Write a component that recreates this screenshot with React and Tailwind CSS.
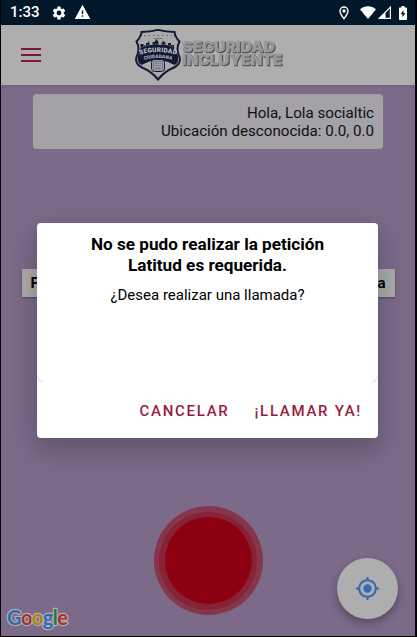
import React from "react";

function StatusBar() {
  return (
    <div className="flex h-[25px] shrink-0 items-center bg-[#00182a] pl-[9px] pr-[8px] text-white">
      <span className="w-[41px] text-[15px] leading-[25px] font-medium">1:33</span>
      <svg className="h-4 w-4" viewBox="0 0 24 24" fill="currentColor">
        <path d="M19.14 12.94c.04-.3.06-.61.06-.94s-.02-.64-.07-.94l2.03-1.58a.49.49 0 0 0 .12-.61l-1.92-3.32a.49.49 0 0 0-.59-.22l-2.39.96c-.5-.38-1.03-.7-1.62-.94L14.4 2.81a.48.48 0 0 0-.48-.41h-3.84c-.24 0-.43.17-.47.41l-.36 2.54c-.59.24-1.13.57-1.62.94l-2.39-.96a.48.48 0 0 0-.59.22L2.74 8.87a.48.48 0 0 0 .12.61l2.03 1.58c-.05.3-.09.63-.09.94s.02.64.07.94l-2.03 1.58a.49.49 0 0 0-.12.61l1.92 3.32c.12.22.37.29.59.22l2.39-.96c.5.38 1.03.7 1.62.94l.36 2.54c.05.24.24.41.48.41h3.84c.24 0 .44-.17.47-.41l.36-2.54c.59-.24 1.13-.56 1.62-.94l2.39.96c.22.08.47 0 .59-.22l1.92-3.32a.48.48 0 0 0-.12-.61zM12 15.6a3.6 3.6 0 1 1 0-7.2 3.6 3.6 0 0 1 0 7.2z" />
      </svg>
      <svg className="ml-[7px] h-[17px] w-[17px]" viewBox="0 0 24 24" fill="currentColor">
        <path d="M1 21h22L12 1 1 21zm12-3h-2v-2h2v2zm0-4h-2v-5h2v5z" />
      </svg>
      <div className="ml-auto flex items-center">
        <svg className="mr-px h-4 w-4" viewBox="0 0 24 24" fill="currentColor">
          <path d="M12 2a7 7 0 0 0-7 7c0 5.25 7 13 7 13s7-7.75 7-13a7 7 0 0 0-7-7zM7 9a5 5 0 0 1 10 0c0 2.88-2.88 7.19-5 9.88C9.92 16.21 7 11.85 7 9z" />
          <circle cx="12" cy="9" r="2.5" />
        </svg>
        <svg className="ml-[7px] h-[13px] w-4" viewBox="0 0 16 13" fill="currentColor">
          <path d="M0 3.2C4.6-.8 11.4-.8 16 3.2L8 13z" />
        </svg>
        <svg className="ml-[2px] h-[13px] w-[13px]" viewBox="0 0 13 13" fill="none" stroke="currentColor">
          <path d="M1.2 12.4H12.4V1.2z" strokeWidth="1.2" />
          <path d="M1 12.5L7.5 6V12.5z" fill="currentColor" stroke="none" />
        </svg>
        <svg className="ml-[8px] h-[14px] w-[8px]" viewBox="0 0 8 14">
          <path fill="#fff" d="M2.500 0h3v1.400H7.300a.7.700 0 0 1 .7.700V13.300a.7.700 0 0 1-.7.700H.7a.7.700 0 0 1-.7-.7V2.100a.7.700 0 0 1 .7-.7H2.500z" />
          <path fill="#00182a" d="M4.500 4L1.700 8.300h1.800V11.500L6.300 7H4.500z" />
        </svg>
      </div>
    </div>
  );
}

function Shield() {
  return (
    <svg className="h-[52px] w-[46px]" viewBox="0 0 46 52">
      <path d="M6.500 3Q15 3 23 .9Q31 3 39.500 3Q40 8 44.500 12.500Q40.500 20 44.500 28Q46.500 35 38 39Q30 42 23 50.500Q16 42 8 39Q-.5 35 1.500 28Q5.500 20 1.500 12.500Q6 8 6.500 3z" fill="#aaa" stroke="#111936" strokeWidth="2" />
      <path d="M5.500 19V15h3v1.500h2.500V14h2v-2l1.500 2v2h3v-3h2l2-3 2 3v3h3v-2l2-2 2 2v2h2.500v-2h3v2h3V20L43 27Q44 34 39.500 36L33 33Q23 29 13 33L6.500 36Q2 34 3 27z" fill="#111936" />
      <path d="M9 6.500h28" stroke="#62656f" strokeDasharray="1.500 3" />
      <path d="M18.500 9.500h9" stroke="#70737e" />
      <path d="M5 19Q23 11 41 19" fill="none" stroke="#858994" strokeWidth=".8" strokeDasharray="1.500 1" />
      <path id="curve1" d="M4 26Q23 20 42 26" fill="none" />
      <text fontSize="6.500" fontWeight="900" fill="#bfc0c4" textAnchor="middle" className="font-['Roboto']">
        <textPath href="#curve1" startOffset="50%" textLength="37">SEGURIDAD</textPath>
      </text>
      <path id="curve2" d="M6 31.500Q23 26.500 40 31.500" fill="none" />
      <text fontSize="4.800" fontWeight="900" fill="#b4b5ba" textAnchor="middle" className="font-['Roboto']">
        <textPath href="#curve2" startOffset="50%" textLength="28">CIUDADANA</textPath>
      </text>
      <rect x="16.500" y="30.500" width="13" height="12" rx="3" fill="#999da5" stroke="#111936" strokeWidth="1" />
      <rect x="18.500" y="32.500" width="9" height="7.500" rx="1.500" fill="none" stroke="#656b7c" strokeWidth=".8" />
      <path d="M20 34.500h6M20 36.500h6M21 38.500h4" stroke="#737989" strokeWidth=".7" />
    </svg>
  );
}

function Header() {
  return (
    <header className="flex h-[60px] shrink-0 items-center bg-[#aeaeae] pl-[20px]">
      <div className="flex w-5 flex-col gap-[4px]">
        <span className="h-[2px] bg-[#7b1a37]" />
        <span className="h-[2px] bg-[#7b1a37]" />
        <span className="h-[2px] bg-[#7b1a37]" />
      </div>
      <div className="ml-[94px] flex items-center">
        <Shield />
        <svg className="h-[30px] w-[104px] -translate-y-px" viewBox="0 0 104 30">
          <g className="font-['Inter'] drop-shadow-[1px_1px_0px_#484848]" fontSize="14" fontWeight="900" fill="#979899" stroke="#979899" strokeWidth=".4">
            <text x="1" y="13" textLength="93" lengthAdjust="spacingAndGlyphs">SEGURIDAD</text>
            <text x="1" y="25.500" textLength="100" lengthAdjust="spacingAndGlyphs">INCLUYENTE</text>
          </g>
        </svg>
      </div>
    </header>
  );
}

function Dialog() {
  return (
    <div className="absolute top-[223px] left-[36px] flex h-[215px] w-[341px] flex-col rounded-[4px] bg-white text-black shadow-[0_10px_24px_2px_rgba(0,0,0,0.22)]">
      <div className="relative h-[159px] pt-[11px] text-center">
        <h1 className="text-[17.150px] leading-[20.500px] font-bold">
          No se pudo realizar la petición
          <br />
          Latitud es requerida.
        </h1>
        <p className="mt-[11px] text-[15px] leading-[18px]">¿Desea realizar una llamada?</p>
        <span className="absolute bottom-0 left-0 h-[6px] w-[6px] rounded-bl-[6px] border-b border-l border-[#e2e2e2]" />
        <span className="absolute right-0 bottom-0 h-[6px] w-[6px] rounded-br-[6px] border-r border-b border-[#e2e2e2]" />
      </div>
      <div className="flex h-[56px] items-center justify-end gap-[25px] pt-[2px] pr-[16px] text-[15px] font-medium tracking-[1.700px] text-[#9b1c41]">
        <button>CANCELAR</button>
        <button>¡LLAMAR YA!</button>
      </div>
    </div>
  );
}

function GoogleMark() {
  return (
    <svg className="absolute bottom-[3px] left-[4px] h-[28px] w-[68px]" viewBox="0 0 68 28">
      <text x="2" y="20" textLength="61" fontSize="20" className="font-['Lato'] [paint-order:stroke]" fontWeight="700" stroke="#b2adb7" strokeWidth="2.400" strokeLinejoin="round">
        <tspan fill="#3267b4">G</tspan><tspan fill="#a83229">o</tspan><tspan fill="#b08208">o</tspan><tspan fill="#3267b4">g</tspan><tspan fill="#25783c">l</tspan><tspan fill="#a83229">e</tspan>
      </text>
    </svg>
  );
}

export default function App() {
  return (
    <div className="h-[637px] w-[417px] overflow-hidden border-r-2 border-b border-l border-black bg-black font-['Roboto',sans-serif]">
      <div className="relative flex h-full flex-col bg-[#7b6a88]">
        <StatusBar />
        <Header />
        <main className="flex flex-1 flex-col items-center bg-[linear-gradient(#716080,#7b6a88_4px)]">
          <section className="mt-[9px] h-[55px] w-[350px] rounded-[4px] bg-[#a4a2a6] px-[9px] pt-[11px] text-right text-[15.150px] leading-[17.500px] text-[#101012]">
            <p>Hola, Lola socialtic</p>
            <p>Ubicación desconocida: 0.0, 0.0</p>
          </section>
          <section className="mt-[120px] flex h-[28px] w-[373px] items-center justify-between bg-[#aaa] px-[9px] text-[15px] font-bold text-black shadow-[0_1px_2px_rgba(0,0,0,0.35)]">
            <span>P</span>
            <span>a</span>
          </section>
          <button aria-label="Emergencia" className="mt-[209px] flex h-[109px] w-[109px] items-center justify-center rounded-full bg-[#86354d]">
            <span className="flex h-[98px] w-[98px] items-center justify-center rounded-full bg-[#872337]">
              <span className="h-[87px] w-[87px] rounded-full bg-[#8d0011]" />
            </span>
          </button>
        </main>
        <GoogleMark />
        <button aria-label="Mi ubicación" className="absolute right-[17px] bottom-[17px] flex h-[61px] w-[61px] items-center justify-center rounded-full bg-[#aeaeae] shadow-[0_4px_8px_rgba(0,0,0,0.3)]">
          <svg className="h-[25px] w-[25px]" viewBox="0 0 24 24" fill="#3768b4">
            <path d="M12 8a4 4 0 1 0 0 8 4 4 0 0 0 0-8zm8.940 3A8.994 8.994 0 0 0 13 3.060V1h-2v2.060A8.994 8.994 0 0 0 3.060 11H1v2h2.060A8.994 8.994 0 0 0 11 20.940V23h2v-2.060A8.994 8.994 0 0 0 20.940 13H23v-2zM12 19a7 7 0 1 1 0-14 7 7 0 0 1 0 14z" />
          </svg>
        </button>
        <Dialog />
      </div>
    </div>
  );
}
